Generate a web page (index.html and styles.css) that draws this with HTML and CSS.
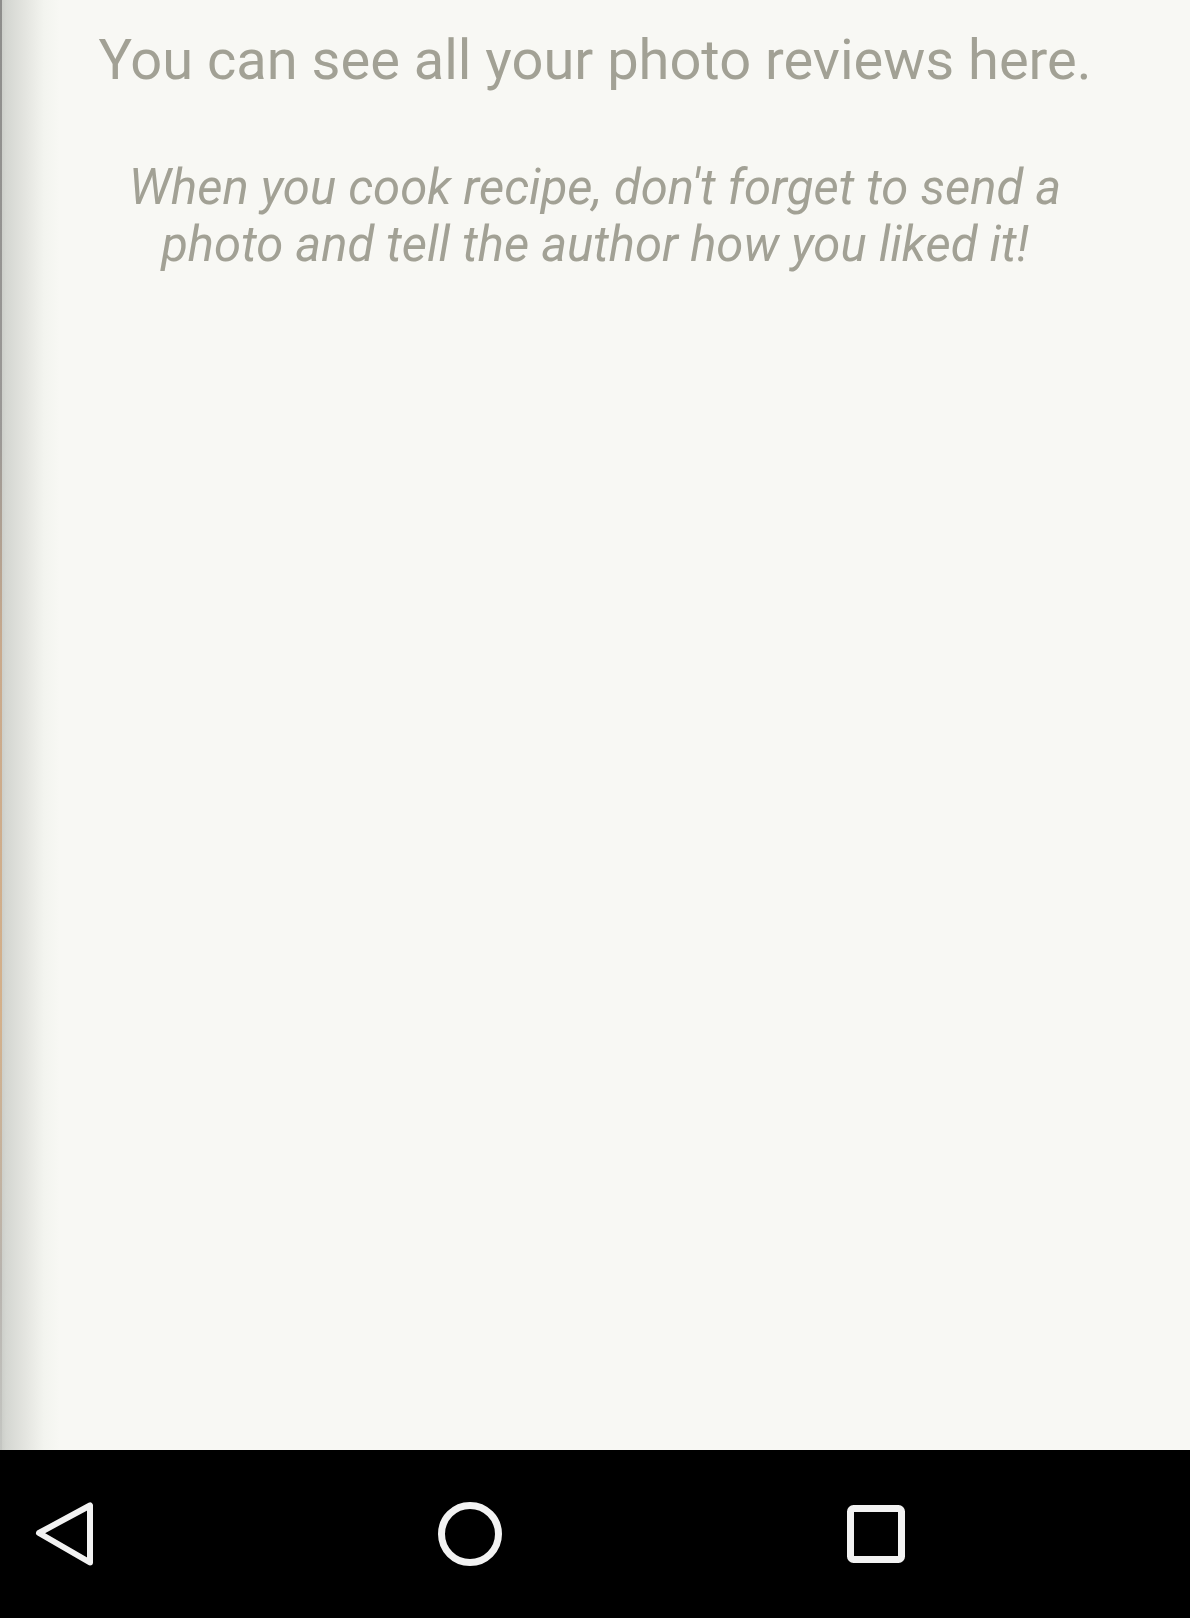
FILE: index.html
```html
<!DOCTYPE html>
<html lang="en">
<head>
<meta charset="utf-8">
<title>Photo reviews</title>
<link rel="stylesheet" href="styles.css">
</head>
<body>
<div class="screen">
  <main class="content">
    <h1 class="title">You can see all your photo reviews here.</h1>
    <p class="hint">When you cook recipe, don't forget to send a photo and tell the author how you liked it!</p>
  </main>
  <nav class="navbar">
    <span class="nav-btn">
      <svg width="64" height="64" viewBox="0 0 64 64"><polygon points="7,31 58,3.5 58,60.5" fill="none" stroke="#f2f2f2" stroke-width="6" stroke-linejoin="round"/></svg>
    </span>
    <span class="nav-btn">
      <svg width="64" height="64" viewBox="0 0 64 64"><circle cx="32" cy="32" r="28.5" fill="none" stroke="#f2f2f2" stroke-width="7"/></svg>
    </span>
    <span class="nav-btn">
      <svg width="64" height="64" viewBox="0 0 64 64"><rect x="6.5" y="6.5" width="51" height="51" rx="3" fill="none" stroke="#f2f2f2" stroke-width="7"/></svg>
    </span>
  </nav>
</div>
</body>
</html>
```

FILE: styles.css
```css
* { box-sizing: border-box; }
html, body {
  margin: 0;
  padding: 0;
  background: #000;
}
.screen {
  width: 1190px;
  height: 1618px;
  display: flex;
  flex-direction: column;
  font-family: Roboto, "Liberation Sans", sans-serif;
}
.content {
  position: relative;
  height: 1450px;
  background: #f8f8f4;
  padding-top: 27px;
  text-align: center;
  color: #a2a195;
}
.content::before {
  content: "";
  position: absolute;
  left: 0;
  top: 0;
  bottom: 0;
  width: 60px;
  background: linear-gradient(to right, #c9cbc6 0px, #d4d6d1 6px, #e6e7e2 28px, #f3f4ef 44px, rgba(248,248,244,0) 60px);
}
.content::after {
  content: "";
  position: absolute;
  left: 0;
  top: 0;
  bottom: 0;
  width: 2px;
  background: linear-gradient(to bottom, #8d8d8b 0%, #9a9896 30%, #c9a98c 45%, #d4b08a 70%, #b7b3ae 88%, #c4c6c2 100%);
}
.title {
  margin: 0;
  font-size: 56px;
  font-weight: 400;
  line-height: 66px;
  white-space: nowrap;
}
.hint {
  margin: 66px 0 0;
  padding: 0 90px;
  font-size: 49px;
  font-style: italic;
  line-height: 57px;
}
.navbar {
  height: 168px;
  background: #000;
  display: flex;
  align-items: center;
  gap: 342px;
  padding-left: 32px;
}
.nav-btn {
  width: 64px;
  height: 64px;
  display: flex;
}
```
